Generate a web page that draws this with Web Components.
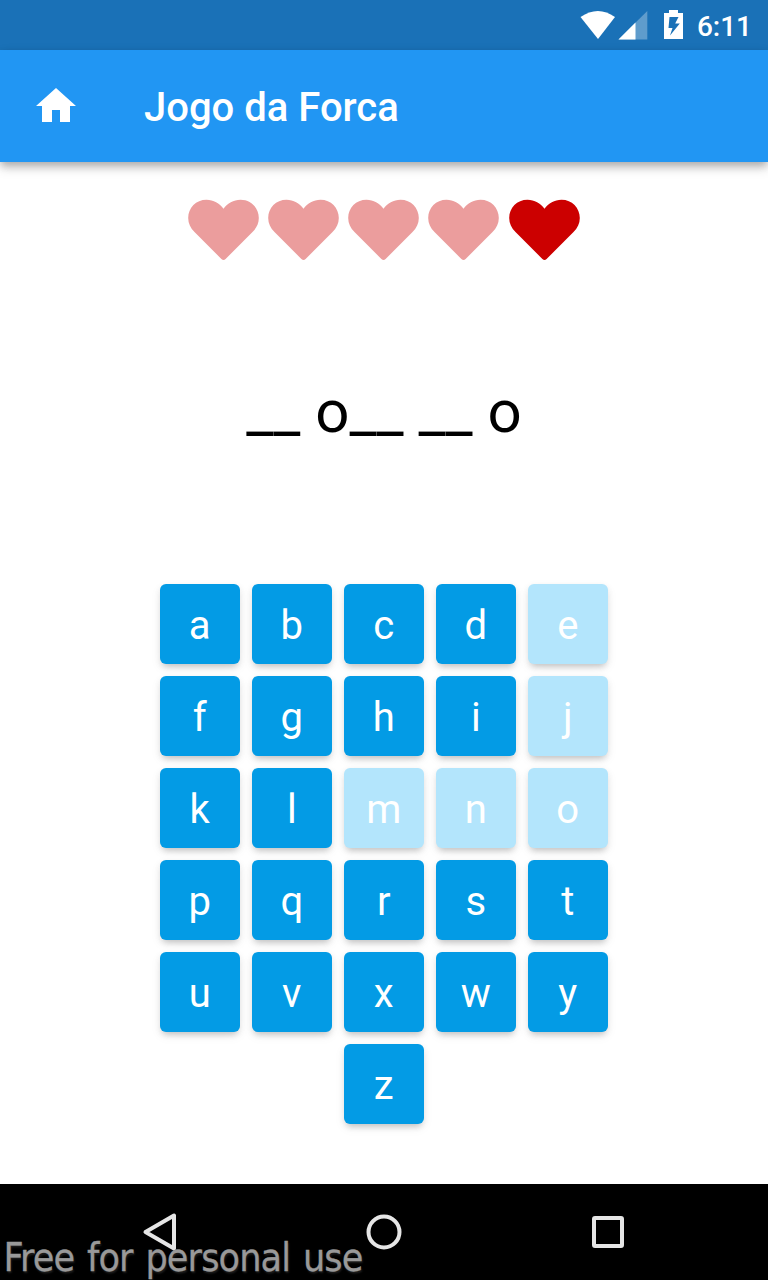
<!DOCTYPE html>
<html lang="pt">
<head>
<meta charset="utf-8">
<title>Jogo da Forca</title>
<style>
html,body{margin:0;padding:0;background:#fff}
body{font-family:Roboto,sans-serif;width:768px;height:1280px;overflow:hidden}
</style>
</head>
<body>
<hangman-app></hangman-app>
<script>
const define = (name, html) => customElements.define(name, class extends HTMLElement {
  constructor() {
    super();
    const t = document.createElement('template');
    t.innerHTML = html;
    this.attachShadow({mode: 'open'}).append(t.content.cloneNode(true));
  }
});

define('status-bar', `
<style>
:host{display:flex;flex:none;height:50px;box-sizing:border-box;background:#1a71b7;color:#fff;justify-content:flex-end;padding-right:16px}
svg{display:block;flex:none}
span{font-size:28px;font-weight:500;line-height:54px;margin-left:3px}
</style>
<svg width="114" height="50" viewBox="0 0 114 50" fill="#fff">
<path d="M.5 17Q18 5 35 17L18 39Z"/>
<path d="M67.300 11V39.500H38.300Z" opacity=".3"/>
<path d="M55.500 22.500V39.500H38.500Z"/>
<path fill-rule="evenodd" d="M84 13H89V10H98V13H103V39H84ZM89.500 17L88.500 28H92.500L90 35.500L99.800 23.500H95.200L98.500 17Z"/>
</svg>
<span><slot></slot></span>`);

define('app-bar', `
<style>
:host{display:flex;flex:none;align-items:center;height:112px;box-sizing:border-box;padding-left:32px;background:#2196f3;color:#fff;box-shadow:0 4px 8px -1px rgba(0,0,0,.22),0 8px 10px rgba(0,0,0,.1),0 2px 10px rgba(0,0,0,.08);position:relative}
svg{display:block}
h1{font-size:40px;font-weight:500;line-height:48px;margin:4px 0 0 64px}
</style>
<svg width="48" height="48" viewBox="0 0 24 24" fill="#fff"><path d="M10 20v-6h4v6h5v-8h3L12 3 2 12h3v8z"/></svg>
<h1><slot></slot></h1>`);

define('life-heart', `
<style>
:host{display:block;width:72px;height:62px;color:#cc0000}
:host([lost]){color:#eb9d9d}
svg{display:block}
</style>
<svg width="72" height="62" viewBox="0 0 72 62" fill="currentColor"><path d="M35.500 9.800C31.500 4.500 25.500 .800 18.500 .800C8 .800.200 9 .200 19C.200 24.500 2.500 29 6.500 33L33.400 60Q35.500 61.800 37.600 60L64.500 33C68.500 29 70.800 24.500 70.800 19C70.800 9 63 .800 52.500 .800C45.500 .800 39.500 4.500 35.500 9.800Z"/></svg>`);

define('secret-word', `
<style>
:host{display:block;text-align:center;font-size:60px;line-height:70px;color:#000;white-space:pre}
</style><slot></slot>`);

define('letter-key', `
<style>
:host{display:block;box-sizing:border-box;padding-right:.5px;width:80px;height:80px;border-radius:6px;background:#039be5;color:#fff;font-size:40px;line-height:84px;text-align:center;box-shadow:0 6px 6px -4px rgba(0,0,0,.14),0 3px 6px rgba(0,0,0,.08),0 4px 12px rgba(0,0,0,.06)}
:host([used]){background:#b3e5fc}
</style><slot></slot>`);

define('letter-board', `
<style>
:host{display:flex;flex-wrap:wrap;justify-content:center;gap:12px;width:448px}
</style><slot></slot>`);

define('nav-bar', `
<style>
:host{display:grid;flex:none;grid-template-columns:repeat(3,224px);justify-content:center;align-items:center;justify-items:center;height:96px;background:#000;position:relative}
svg{display:block;fill:none;stroke:#e6e6e6;stroke-width:4}
.mark{position:absolute;left:3.500px;top:49.500px;font:39px/48px "DejaVu Sans Condensed","DejaVu Sans",sans-serif;font-stretch:condensed;letter-spacing:-.85px;word-spacing:2.500px;color:#999;-webkit-text-stroke:.3px #999;white-space:nowrap;text-shadow:1px 2px 2px rgba(60,60,60,.5)}
</style>
<svg width="40" height="48" viewBox="0 0 40 48"><path stroke-linejoin="round" d="M5.500 24L34 7.500V40.500Z"/></svg>
<svg width="40" height="40" viewBox="0 0 40 40"><circle cx="20" cy="20" r="15.500"/></svg>
<svg width="40" height="40" viewBox="0 0 40 40"><rect x="6" y="6" width="28" height="28" rx="1"/></svg>
<div class="mark"><slot></slot></div>`);

define('hangman-app', `
<style>
:host{display:flex;flex-direction:column;width:768px;height:1280px;background:#fff}
main{flex:1;min-height:0;display:flex;flex-direction:column;align-items:center;box-sizing:border-box;padding-top:37px}
.lives{display:flex;gap:8.250px}
secret-word{margin:46px 0 137px}
</style>
<status-bar>6:11</status-bar>
<app-bar>Jogo da Forca</app-bar>
<main>
<div class="lives"><life-heart lost></life-heart><life-heart lost></life-heart><life-heart lost></life-heart><life-heart lost></life-heart><life-heart></life-heart></div>
<secret-word>__ o__ __ o</secret-word>
<letter-board>${[...'abcdefghijklmnopqrstuvxwyz'].map(c => `<letter-key${'ejmno'.includes(c) ? ' used' : ''}>${c}</letter-key>`).join('')}</letter-board>
</main>
<nav-bar>Free for personal use</nav-bar>`);
</script>
</body>
</html>
